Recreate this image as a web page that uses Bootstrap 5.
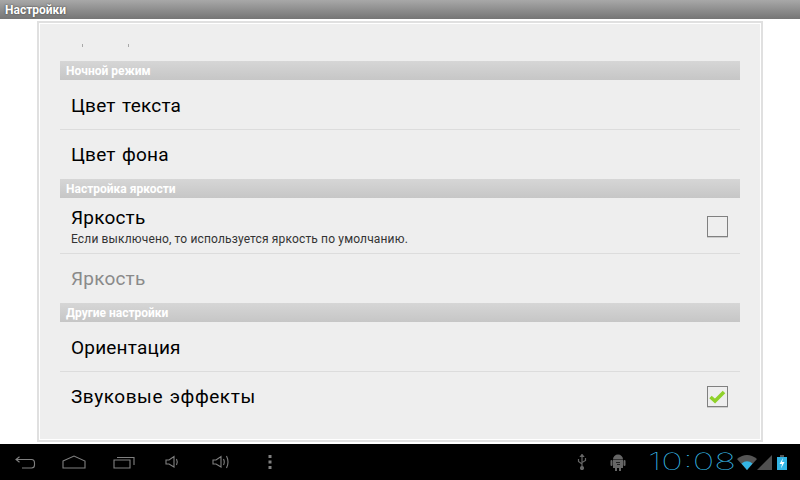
<!DOCTYPE html>
<html lang="ru">
<head>
<meta charset="utf-8">
<title>Настройки</title>
<link href="https://cdn.jsdelivr.net/npm/bootstrap@5.3.0/dist/css/bootstrap.min.css" rel="stylesheet">
<style>
html,body{width:800px;height:480px;overflow:hidden;margin:0;background:#fff;font-family:Roboto,"Noto Sans",sans-serif}
.screen{width:800px;height:480px}
.titlebar{height:19px;background:linear-gradient(#a8a8a8,#757575);color:#fff;font-size:12px;font-weight:700;line-height:20px;padding-left:5px;text-shadow:0 0 2px #333}
.panelwrap{height:425px;padding:2px 37px 2px}
.prefpanel{height:421px;background:#eee;border:2px solid #e0e0e0;outline:1px solid #fff;outline-offset:-3px;padding:0 21px}
.dotsrow{height:38px;position:relative}
.tick{width:1px;height:3px;background:#a8a8a8;margin-top:21px}
.ticks{gap:45px;padding-left:22px}
.cathead{height:19px;background:linear-gradient(#d6d6d6,#c6c6c6);color:#fff;font-size:12px;font-weight:700;line-height:20px;padding-left:6px}
.prefitem{height:50px;padding:2px 12px 0 11px;border-bottom:1px solid #dcdcdc;color:#000;font-size:19px}
.prefitem.tallitem{height:56px;padding-top:2px}
.prefitem.noline{border-bottom:0;height:49px;padding-top:0}
.prefitem.dimmed{color:#8a8a8a}
.itemtitle{line-height:22px;letter-spacing:.2px;word-spacing:1.5px}
.itemtitle.widetext{letter-spacing:.55px}
.itemsub{font-size:12px;line-height:15px;padding-top:3px;color:#333;letter-spacing:.15px}
.tickbox{width:21px;height:21px;border:1px solid #808080;box-shadow:0 1px 0 #ccc;display:flex;align-items:center;justify-content:center}
.navstrip{height:36px;background:#000;padding-left:15px;padding-right:13px}
.navicon{display:block;flex:none}
.clock{font-family:Inter,Lato,sans-serif;font-weight:100;font-size:23.5px;line-height:36px;color:#3cc4f5;width:87px;white-space:nowrap}
.clockface{display:inline-block;transform:scaleX(1.55);transform-origin:left center}
</style>
</head>
<body>
<div class="screen d-flex flex-column">
  <div class="titlebar">Настройки</div>
  <div class="panelwrap">
    <div class="prefpanel">
      <div class="dotsrow d-flex ticks"><div class="tick"></div><div class="tick"></div></div>
      <div class="cathead">Ночной режим</div>
      <div class="prefitem d-flex align-items-center"><div class="itemtitle">Цвет текста</div></div>
      <div class="prefitem d-flex align-items-center noline"><div class="itemtitle">Цвет фона</div></div>
      <div class="cathead">Настройка яркости</div>
      <div class="prefitem tallitem d-flex align-items-center justify-content-between">
        <div><div class="itemtitle">Яркость</div><div class="itemsub">Если выключено, то используется яркость по умолчанию.</div></div>
        <div class="tickbox"></div>
      </div>
      <div class="prefitem d-flex align-items-center noline dimmed"><div class="itemtitle">Яркость</div></div>
      <div class="cathead">Другие настройки</div>
      <div class="prefitem d-flex align-items-center"><div class="itemtitle">Ориентация</div></div>
      <div class="prefitem d-flex align-items-center justify-content-between noline">
        <div class="itemtitle widetext">Звуковые эффекты</div>
        <div class="tickbox"><svg width="17" height="15" viewBox="0 0 17 15"><path d="M1.500 8 L6 12 L15 3" fill="none" stroke="#8fd12a" stroke-width="3.6"/></svg></div>
      </div>
    </div>
  </div>
  <div class="navstrip d-flex align-items-center">
    <svg class="navicon" width="21" height="13" viewBox="0 0 21 13" fill="none" stroke="#808080" stroke-width="1.1"><path d="M1 3.500H16.500Q19.500 3.500 19.500 7V9Q19.500 12 16.500 12H7M4.500 .8 1 3.500l3.500 2.800"/></svg>
    <svg class="navicon" style="margin-left:26px" width="24" height="14" viewBox="0 0 24 14" fill="none" stroke="#808080" stroke-width="1.1"><path d="M1 6 12 1 23 6V13H1Z"/></svg>
    <svg class="navicon" style="margin-left:27px" width="22" height="14" viewBox="0 0 22 14" fill="none" stroke="#808080" stroke-width="1.1"><path d="M1 5H17V13H1ZM4 2.500H21V10"/></svg>
    <svg class="navicon" style="margin-left:30px" width="14" height="14" viewBox="0 0 14 14" fill="none" stroke="#808080" stroke-width="1.1"><path d="M1 5H4L9 1.500V12L4 9H1ZM11.500 4Q13 7 11.500 10"/></svg>
    <svg class="navicon" style="margin-left:33px" width="18" height="16" viewBox="0 0 18 16" fill="none" stroke="#808080" stroke-width="1.1"><path d="M1 6H4L9 2.500V13L4 10H1ZM11.500 5Q13 8 11.500 11M14.500 2Q17.500 8 14.500 14"/></svg>
    <svg class="navicon" style="margin-left:38px" width="4" height="14" viewBox="0 0 4 14" fill="#808080"><rect x="0.500" y="0" width="3" height="3"/><rect x="0.500" y="5.500" width="3" height="3"/><rect x="0.500" y="11" width="3" height="3"/></svg>
    <svg class="navicon ms-auto" width="10" height="16" viewBox="0 0 10 16" fill="none" stroke="#666" stroke-width="1.2"><path d="M5 1V14M1.500 5V7.500L5 10M8.500 4V6.500L5 8.500"/><circle cx="5" cy="14" r="1.500" fill="#666"/><path d="M3.500 2.500 5 .5 6.500 2.500Z" fill="#666"/></svg>
    <svg class="navicon" style="margin-left:23px" width="16" height="17" viewBox="0 0 16 17" fill="#666"><path d="M3 5.500A5 5 0 0 1 13 5.500Z"/><rect x="3" y="6" width="10" height="8"/><rect x=".500" y="6" width="2" height="6" rx="1"/><rect x="13.500" y="6" width="2" height="6" rx="1"/><rect x="5" y="14" width="2" height="3"/><rect x="9" y="14" width="2" height="3"/><path d="M6 8h4v1H6zM7 10h3v1H7z" fill="#222"/></svg>
    <div class="clock" style="margin-left:22px"><span class="clockface">10:08</span></div>
    <svg class="navicon" style="margin-left:2px" width="20" height="16" viewBox="0 0 20 16"><path d="M0 5Q10 -3 20 5L10 16Z" fill="#555"/><path d="M4.500 9.500Q10 5 15.500 9.500L10 16Z" fill="#33b5e5"/></svg>
    <svg class="navicon" width="15" height="15" viewBox="0 0 15 15"><path d="M15 0V15H0Z" fill="#4f4f4f"/></svg>
    <svg class="navicon" style="margin-left:5px" width="10" height="15" viewBox="0 0 10 15"><rect x="3" y="0" width="4" height="2" fill="#555"/><rect x="0" y="2" width="10" height="13" fill="#33b5e5"/><path d="M6 3 2.500 9H5L4 13.500 7.500 7H5Z" fill="#fff"/></svg>
  </div>
</div>
<script src="https://cdn.jsdelivr.net/npm/bootstrap@5.3.0/dist/js/bootstrap.bundle.min.js"></script>
</body>
</html>
